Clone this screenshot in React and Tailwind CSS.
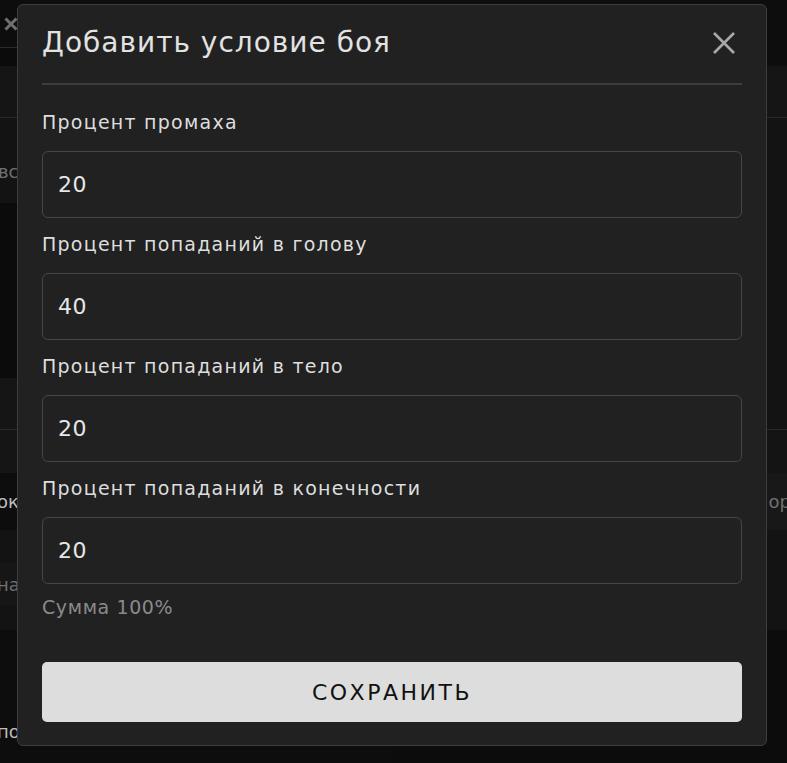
export default function App() {
  const fields = [
    ["Процент промаха", "20"],
    ["Процент попаданий в голову", "40"],
    ["Процент попаданий в тело", "20"],
    ["Процент попаданий в конечности", "20"],
  ];
  return (
    <div
      className="relative h-[763px] w-full overflow-hidden bg-[#0c0c0c]"
      style={{ fontFamily: '"DejaVu Sans", "Noto Sans", sans-serif' }}
    >
      {/* dimmed page behind the dialog */}
      <div className="grid h-full grid-cols-2">
        <div className="flex flex-col">
          <div className="flex h-[48px] items-center border-b border-[#2a2a2a] bg-[#0d0d0d] pl-[4px]">
            <svg width="14" height="14" viewBox="0 0 14 14" fill="none">
              <path d="M1.5 1.5L12.5 12.5M12.5 1.5L1.5 12.5" stroke="#707070" strokeWidth="3" />
            </svg>
          </div>
          <div className="h-[18px] bg-[#0b0b0b]" />
          <div className="h-[52px] border-b border-[#2a2a2a] bg-[#151515]" />
          <div className="flex h-[85px] items-center bg-[#131313] text-[18px] text-[#6f6f6f]">
            <span className="-ml-[2px] pt-[22px]">вс</span>
          </div>
          <div className="h-[175px] bg-[#0b0b0b]" />
          <div className="h-[52px] border-b border-[#2a2a2a] bg-[#151515]" />
          <div className="h-[43px] bg-[#151515]" />
          <div className="flex h-[57px] items-center bg-[#0d0d0d] text-[18px] text-[#bdbdbd]">
            <span className="-ml-[3px]">ок</span>
          </div>
          <div className="h-[33px] bg-[#131313]" />
          <div className="flex h-[42px] items-center bg-[#161616] text-[18px] text-[#6f6f6f]">
            <span className="-ml-[3px]">на</span>
          </div>
          <div className="h-[25px] bg-[#131313]" />
          <div className="flex flex-1 items-start bg-[#0d0d0d] pt-[88px] text-[18px] text-[#bdbdbd]">
            <span className="-ml-[3px]">по</span>
          </div>
        </div>
        <div className="flex flex-col items-end">
          <div className="h-[66px] w-full bg-[#0d0d0d]" />
          <div className="h-[52px] w-full border-b border-[#2a2a2a] bg-[#151515]" />
          <div className="h-[312px] w-full border-b border-[#2a2a2a] bg-[#131313]" />
          <div className="h-[43px] w-full bg-[#141414]" />
          <div className="flex h-[57px] w-full items-center justify-end bg-[#181818] text-[18px] text-[#707070]">
            <span className="-mr-[4px]">ор</span>
          </div>
          <div className="h-[100px] w-full bg-[#131313]" />
          <div className="w-full flex-1 bg-[#0c0c0c]" />
        </div>
      </div>

      {/* dialog */}
      <div className="absolute left-[17px] top-[4px] flex h-[742px] w-[750px] flex-col rounded-[6px] border border-[#3e3e3e] bg-[#212121] px-6">
        <div className="flex h-[78px] items-center justify-between pb-[2px]">
          <h2 className="text-[28px] leading-[40px] tracking-[1px] text-[#e2e2e2]">Добавить условие боя</h2>
          <button className="mr-[6px] flex h-[24px] w-[24px] items-center justify-center">
            <svg width="24" height="24" viewBox="0 0 24 24" fill="none">
              <path d="M2 2L22 22M22 2L2 22" stroke="#a9a9a9" strokeWidth="2.6" strokeLinecap="butt" />
            </svg>
          </button>
        </div>
        <div className="h-[2px] bg-[#3d3d3d]" />
        <div className="mt-[24px] flex flex-col gap-[13px]">
          {fields.map(([label, value]) => (
            <div key={label} className="flex flex-col">
              <label className="mb-[15px] text-[19px] leading-[27px] tracking-[1.25px] text-[#dedede]">{label}</label>
              <div className="flex h-[67px] items-center rounded-[6px] border border-[#464646] px-[15px] text-[22px] tracking-[0.5px] text-[#e6e6e6]">
                {value}
              </div>
            </div>
          ))}
        </div>
        <div className="mt-[10px] text-[19px] leading-[27px] tracking-[0.6px] text-[#8a8a8a]">Сумма 100%</div>
        <button className="mt-[41px] flex h-[60px] items-center justify-center rounded-[5px] bg-[#dddddd] text-[22px] tracking-[2.5px] text-[#111]">
          СОХРАНИТЬ
        </button>
      </div>
    </div>
  );
}
